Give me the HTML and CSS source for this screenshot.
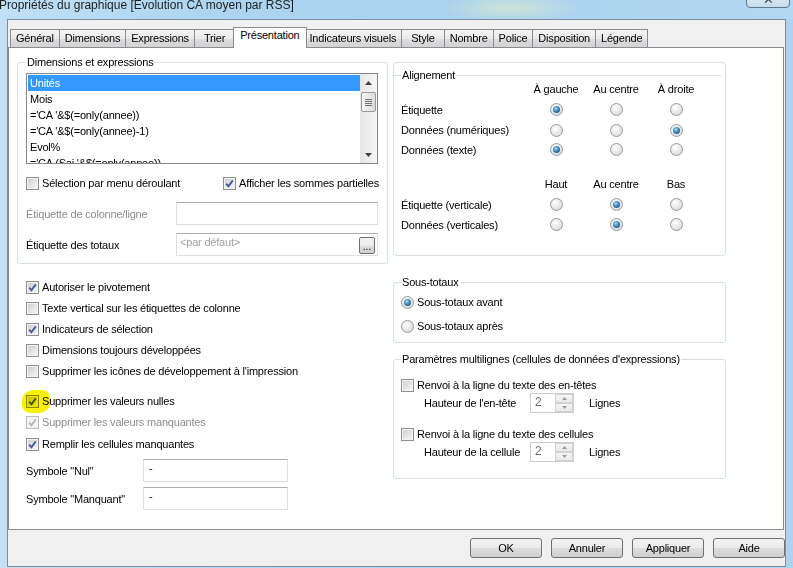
FILE: index.html
```html
<!DOCTYPE html>
<html lang="fr">
<head>
<meta charset="utf-8">
<title>Propriétés du graphique</title>
<link rel="stylesheet" href="styles.css">
</head>
<body>
<div class="window">
  <div class="titlebar">
    <div class="title">Propriétés du graphique [Evolution CA moyen par RSS]</div>
    <div class="close">✕</div>
  </div>
  <div class="client">
    <div class="tabs">
      <div class="tab first">Général</div>
      <div class="tab">Dimensions</div>
      <div class="tab">Expressions</div>
      <div class="tab wide">Trier</div>
      <div class="tab active">Présentation</div>
      <div class="tab">Indicateurs visuels</div>
      <div class="tab wide">Style</div>
      <div class="tab">Nombre</div>
      <div class="tab">Police</div>
      <div class="tab">Disposition</div>
      <div class="tab">Légende</div>
    </div>
    <div class="panel">
      <div class="col-left">
        <fieldset class="group dims">
          <legend>Dimensions et expressions</legend>
          <div class="listbox">
            <div class="items">
              <div class="item sel">Unités</div>
              <div class="item">Mois</div>
              <div class="item">='CA '&amp;$(=only(annee))</div>
              <div class="item">='CA '&amp;$(=only(annee)-1)</div>
              <div class="item">Evol%</div>
              <div class="item">='CA (Sai '&amp;$(=only(annee))</div>
            </div>
            <div class="vscroll">
              <div class="sb-arrow"><svg width="7" height="4" viewBox="0 0 7 4"><path d="M0 4 L3.5 0 L7 4 Z" fill="#444"/></svg></div>
              <div class="sb-thumb"><span></span><span></span><span></span><span></span></div>
              <div class="sb-track"></div>
              <div class="sb-arrow"><svg width="7" height="4" viewBox="0 0 7 4"><path d="M0 0 L3.5 4 L7 0 Z" fill="#444"/></svg></div>
            </div>
          </div>
          <div class="row2">
            <div class="chk c1"><span class="box"></span>Sélection par menu déroulant</div>
            <div class="chk"><span class="box"><svg width="11" height="11" viewBox="0 0 11 11"><path d="M2.2 5.6 L4.4 8.2 L8.8 2.4" fill="none" stroke="#45589a" stroke-width="1.8"/></svg></span>Afficher les sommes partielles</div>
          </div>
          <div class="field f1"><span class="lbl disabled">Étiquette de colonne/ligne</span><div class="input"></div></div>
          <div class="field f2"><span class="lbl">Étiquette des totaux</span><div class="input ph"><span>&lt;par défaut&gt;</span><span class="dots">...</span></div></div>
        </fieldset>

        <div class="checklist">
          <div class="chk"><span class="box"><svg width="11" height="11" viewBox="0 0 11 11"><path d="M2.2 5.6 L4.4 8.2 L8.8 2.4" fill="none" stroke="#45589a" stroke-width="1.8"/></svg></span>Autoriser le pivotement</div>
          <div class="chk"><span class="box"></span>Texte vertical sur les étiquettes de colonne</div>
          <div class="chk"><span class="box"><svg width="11" height="11" viewBox="0 0 11 11"><path d="M2.2 5.6 L4.4 8.2 L8.8 2.4" fill="none" stroke="#45589a" stroke-width="1.8"/></svg></span>Indicateurs de sélection</div>
          <div class="chk"><span class="box"></span>Dimensions toujours développées</div>
          <div class="chk"><span class="box"></span>Supprimer les icônes de développement à l'impression</div>
          <div class="chk spaced"><span class="box"><svg width="11" height="11" viewBox="0 0 11 11"><path d="M2.2 5.6 L4.4 8.2 L8.8 2.4" fill="none" stroke="#45589a" stroke-width="1.8"/></svg></span>Supprimer les valeurs nulles<span class="marker"></span></div>
          <div class="chk disabled"><span class="box dis"><svg width="11" height="11" viewBox="0 0 11 11"><path d="M2.2 5.6 L4.4 8.2 L8.8 2.4" fill="none" stroke="#b4b4b4" stroke-width="1.8"/></svg></span>Supprimer les valeurs manquantes</div>
          <div class="chk mt1"><span class="box"><svg width="11" height="11" viewBox="0 0 11 11"><path d="M2.2 5.6 L4.4 8.2 L8.8 2.4" fill="none" stroke="#45589a" stroke-width="1.8"/></svg></span>Remplir les cellules manquantes</div>
          <div class="sym s1"><span class="sym-lbl">Symbole "Nul"</span><div class="input txt">-</div></div>
          <div class="sym"><span class="sym-lbl">Symbole "Manquant"</span><div class="input txt">-</div></div>
        </div>
      </div>

      <div class="col-right">
        <div class="align-box">
          <fieldset class="align">
            <legend>Alignement</legend>
            <div class="agrid">
              <span></span><span class="hd">À gauche</span><span class="hd">Au centre</span><span class="hd">À droite</span>
              <span class="al">Étiquette</span><span class="rc"><span class="radio on"></span></span><span class="rc"><span class="radio"></span></span><span class="rc"><span class="radio"></span></span>
              <span class="al">Données (numériques)</span><span class="rc"><span class="radio"></span></span><span class="rc"><span class="radio"></span></span><span class="rc"><span class="radio on"></span></span>
              <span class="al">Données (texte)</span><span class="rc"><span class="radio on"></span></span><span class="rc"><span class="radio"></span></span><span class="rc"><span class="radio"></span></span>
              <span class="spacer"></span>
              <span></span><span class="hd">Haut</span><span class="hd">Au centre</span><span class="hd">Bas</span>
              <span class="al">Étiquette (verticale)</span><span class="rc"><span class="radio"></span></span><span class="rc"><span class="radio on"></span></span><span class="rc"><span class="radio"></span></span>
              <span class="al">Données (verticales)</span><span class="rc"><span class="radio"></span></span><span class="rc"><span class="radio on"></span></span><span class="rc"><span class="radio"></span></span>
            </div>
          </fieldset>
        </div>

        <fieldset class="group sous">
          <legend>Sous-totaux</legend>
          <div class="rad"><span class="radio on"></span>Sous-totaux avant</div>
          <div class="rad r2"><span class="radio"></span>Sous-totaux après</div>
        </fieldset>

        <fieldset class="group multi">
          <legend>Paramètres multilignes (cellules de données d'expressions)</legend>
          <div class="chk"><span class="box"></span>Renvoi à la ligne du texte des en-têtes</div>
          <div class="hrow"><span class="hlbl">Hauteur de l'en-tête</span>
            <div class="spin"><span class="sv">2</span><span class="sbtns"><span class="sbtn"><svg width="5" height="3" viewBox="0 0 5 3"><path d="M0 3 L2.5 0 L5 3Z" fill="#9a9a9a"/></svg></span><span class="sbtn"><svg width="5" height="3" viewBox="0 0 5 3"><path d="M0 0 L2.5 3 L5 0Z" fill="#9a9a9a"/></svg></span></span></div>
            <span class="unit">Lignes</span></div>
          <div class="chk c2"><span class="box"></span>Renvoi à la ligne du texte des cellules</div>
          <div class="hrow"><span class="hlbl">Hauteur de la cellule</span>
            <div class="spin"><span class="sv">2</span><span class="sbtns"><span class="sbtn"><svg width="5" height="3" viewBox="0 0 5 3"><path d="M0 3 L2.5 0 L5 3Z" fill="#9a9a9a"/></svg></span><span class="sbtn"><svg width="5" height="3" viewBox="0 0 5 3"><path d="M0 0 L2.5 3 L5 0Z" fill="#9a9a9a"/></svg></span></span></div>
            <span class="unit">Lignes</span></div>
        </fieldset>
      </div>
    </div>
    <div class="buttons">
      <div class="btn">OK</div>
      <div class="btn">Annuler</div>
      <div class="btn">Appliquer</div>
      <div class="btn">Aide</div>
    </div>
  </div>
</div>
</body>
</html>
```

FILE: styles.css
```css
* { box-sizing: border-box; }

body {
  margin: 0;
  width: 793px;
  height: 568px;
  overflow: hidden;
  background: linear-gradient(90deg, #c4e0f4 0%, #b2d6f0 40%, #aed3ef 100%);
  font-family: "Liberation Sans", Arial, sans-serif;
  font-size: 11px;
  letter-spacing: -0.2px;
  color: #000;
}

.window {
  display: flex;
  flex-direction: column;
  height: 568px;
}

.titlebar {
  height: 19px;
  flex: none;
  display: flex;
  align-items: flex-start;
  overflow: hidden;
  background:
    radial-gradient(ellipse 70px 14px at 510px 8px, rgba(220, 235, 200, 0.7), rgba(220, 235, 200, 0) 100%),
    linear-gradient(90deg, #bfe0f5 0%, #acd4f0 30%, #a9d2ef 60%, #b3d8f1 100%);
}

.title {
  margin: -2px 0 0 -1px;
  font-size: 12px;
  line-height: 14px;
  letter-spacing: 0;
  color: #1e1e1e;
  white-space: nowrap;
}

.close {
  margin: -9px 3px 0 auto;
  width: 44px;
  height: 17px;
  border: 1px solid #5f7690;
  border-radius: 0 0 4px 4px;
  background: linear-gradient(#e9f1f8, #c6dbec);
  color: #3c4e66;
  font-size: 13px;
  line-height: 15px;
  text-align: center;
}

.client {
  flex: 1;
  margin: 0 7px 1px 7px;
  background: #f0f0f0;
  border: 1px solid #7f8d9c;
  display: flex;
  flex-direction: column;
}

/* Tabs */
.tabs {
  display: flex;
  align-items: flex-end;
  height: 27px;
  padding: 7px 0 0 2px;
  flex: none;
}

.tab {
  height: 18px;
  line-height: 17px;
  padding: 0 5px;
  border: 1px solid #898c95;
  border-bottom: none;
  border-left: none;
  background: linear-gradient(#f3f3f3 0%, #ebebeb 50%, #dddddd 51%, #d3d3d3 100%);
  white-space: nowrap;
}

.tab.first { border-left: 1px solid #898c95; }
.tab.wide { padding: 0 9px; }

.tab.active {
  position: relative;
  z-index: 2;
  height: 21px;
  margin: 0 -2px -1px -2px;
  padding: 0 6px;
  line-height: 15px;
  background: #fff;
  border-left: 1px solid #898c95;
}

.tab.active + .tab { border-left: none; }

/* Panel */
.panel {
  flex: none;
  height: 483px;
  margin-right: 1px;
  background: #fff;
  border: 1px solid #898c95;
  display: flex;
  gap: 5px;
  padding: 8px 0 0 8px;
}

.col-left {
  width: 371px;
  flex: none;
  display: flex;
  flex-direction: column;
}

.col-right {
  width: 333px;
  flex: none;
  display: flex;
  flex-direction: column;
}

fieldset.group {
  margin: 0;
  min-width: 0;
  border: 1px solid #d5dfe5;
  border-radius: 3px;
}

legend {
  padding: 0 1px;
  line-height: 13px;
}

fieldset.dims {
  padding: 4px 8px 7px 8px;
}

/* Listbox */
.listbox {
  width: 352px;
  height: 91px;
  border: 1px solid #828790;
  display: flex;
  overflow: hidden;
}

.items {
  flex: 1;
  padding: 1px 0 0 1px;
}

.item {
  height: 16px;
  line-height: 16px;
  padding-left: 2px;
  white-space: nowrap;
}

.item.sel {
  background: #3399ff;
  color: #fff;
}

.vscroll {
  width: 17px;
  flex: none;
  display: flex;
  flex-direction: column;
  background: linear-gradient(90deg, #e6e6e6, #f6f6f6);
}

.sb-arrow {
  height: 17px;
  display: flex;
  align-items: center;
  justify-content: center;
}

.sb-thumb {
  height: 20px;
  margin: 1px 1px 0 1px;
  border: 1px solid #9a9a9a;
  border-radius: 2px;
  background: linear-gradient(90deg, #f4f4f4, #dcdcdc);
  display: flex;
  flex-direction: column;
  align-items: center;
  justify-content: center;
  gap: 1px;
}

.sb-thumb span {
  width: 7px;
  height: 1px;
  background: #6e6e6e;
}

.sb-track { flex: 1; }

/* Checkboxes */
.chk {
  position: relative;
  display: flex;
  align-items: center;
  gap: 3px;
  height: 16px;
  white-space: nowrap;
}

.box {
  width: 13px;
  height: 13px;
  flex: none;
  border: 1px solid #8e8f8f;
  background: linear-gradient(135deg, #c9ccd1 0%, #e4e5e7 55%, #f7f7f7 100%);
  box-shadow: inset 0 0 0 1px #f3f3f3;
  display: flex;
  align-items: center;
  justify-content: center;
}

.box.dis {
  border-color: #bcbcbc;
  background: #f4f4f4;
}

.chk.disabled { color: #8d8d8d; }

.row2 {
  display: flex;
  margin-top: 11px;
}

.row2 .c1 { width: 199px; }

.field {
  display: flex;
  align-items: center;
  height: 23px;
}

.field.f1 { margin-top: 11px; }
.field.f2 { margin-top: 8px; }

.lbl {
  width: 150px;
  flex: none;
}

.lbl.disabled { color: #8d8d8d; }

.input {
  width: 202px;
  height: 23px;
  border: 1px solid #dbdfe6;
  border-top-color: #abadb3;
  background: #fff;
}

.input.ph {
  display: flex;
  justify-content: space-between;
  padding: 2px 2px 0 3px;
  color: #a0a0a0;
}

.dots {
  width: 16px;
  height: 17px;
  margin-top: 1px;
  border: 1px solid #707070;
  border-radius: 2px;
  background: linear-gradient(#f3f3f3 0%, #ebebeb 50%, #dddddd 51%, #cfcfcf 100%);
  color: #000;
  font-size: 10px;
  line-height: 18px;
  text-align: center;
  letter-spacing: 0;
}

.checklist {
  margin-top: 15px;
  padding-left: 9px;
  display: flex;
  flex-direction: column;
  gap: 5px;
}

.chk.spaced { margin-top: 9px; }
.chk.mt1 { margin-top: 1px; }

.marker {
  position: absolute;
  left: -4px;
  top: -3px;
  width: 28px;
  height: 23px;
  background: #f7f000;
  border-radius: 45% 30% 40% 35%;
  mix-blend-mode: multiply;
}

.sym {
  display: flex;
  align-items: center;
  height: 23px;
}

.sym.s1 { margin-top: 2px; }

.sym-lbl {
  width: 117px;
  flex: none;
}

.input.txt {
  width: 145px;
  padding: 2px 0 0 5px;
  line-height: 13px;
}

/* Alignment */
.align-box {
  margin-top: 6px;
  height: 194px;
  border: 1px solid #d5dfe5;
  border-radius: 4px;
}

fieldset.align {
  margin: 6px 4px 0 0;
  padding: 0 0 0 7px;
  border: none;
  border-top: 1px solid #d5dfe5;
  min-width: 0;
}

.agrid {
  margin-top: -3px;
  display: grid;
  grid-template-columns: 125px 60px 60px 60px;
  grid-template-rows: 20px 21px 20px 19px 14px 21px 21px 19px;
  align-items: center;
}

.agrid .spacer { grid-column: 1 / -1; }

.hd { text-align: center; white-space: nowrap; }
.al { white-space: nowrap; }

.rc {
  display: flex;
  justify-content: center;
  align-items: center;
}

.radio {
  width: 13px;
  height: 13px;
  flex: none;
  border-radius: 50%;
  border: 1px solid #9a9b9c;
  background: radial-gradient(circle at 40% 35%, #ffffff 0%, #e6e6e6 55%, #cfd0d2 100%);
  display: flex;
  align-items: center;
  justify-content: center;
}

.radio.on::after {
  content: "";
  width: 7px;
  height: 7px;
  border-radius: 50%;
  background: radial-gradient(circle at 40% 35%, #a9dcfb 0%, #3c86b8 45%, #17496d 100%);
}

fieldset.sous {
  margin-top: 20px;
  padding: 5px 0 8px 7px;
}

.rad {
  display: flex;
  align-items: center;
  gap: 3px;
  height: 16px;
}

.rad.r2 { margin-top: 8px; }

fieldset.multi {
  margin-top: 10px;
  padding: 11px 0 16px 7px;
}

.chk.c2 { margin-top: 13px; }

.hrow {
  display: flex;
  align-items: center;
  height: 20px;
  padding-left: 23px;
}

.hlbl {
  width: 106px;
  flex: none;
}

.spin {
  width: 44px;
  height: 20px;
  border: 1px solid #c9ccd2;
  display: flex;
  justify-content: space-between;
}

.sv {
  padding: 1px 0 0 4px;
  color: #6d6d6d;
  font-size: 12px;
}

.sbtns {
  width: 18px;
  display: flex;
  flex-direction: column;
}

.sbtn {
  flex: 1;
  border: 1px solid #d3d3d3;
  background: linear-gradient(#f6f6f6, #e9e9e9);
  display: flex;
  align-items: center;
  justify-content: center;
}

.unit { margin-left: 15px; }

/* Buttons */
.buttons {
  display: flex;
  justify-content: flex-end;
  gap: 9px;
  padding: 8px 0 0 0;
}

.btn {
  width: 72px;
  height: 20px;
  border: 1px solid #707070;
  border-radius: 3px;
  background: linear-gradient(#f2f2f2 0%, #ebebeb 50%, #dddddd 51%, #cfcfcf 100%);
  text-align: center;
  line-height: 18px;
}
```
